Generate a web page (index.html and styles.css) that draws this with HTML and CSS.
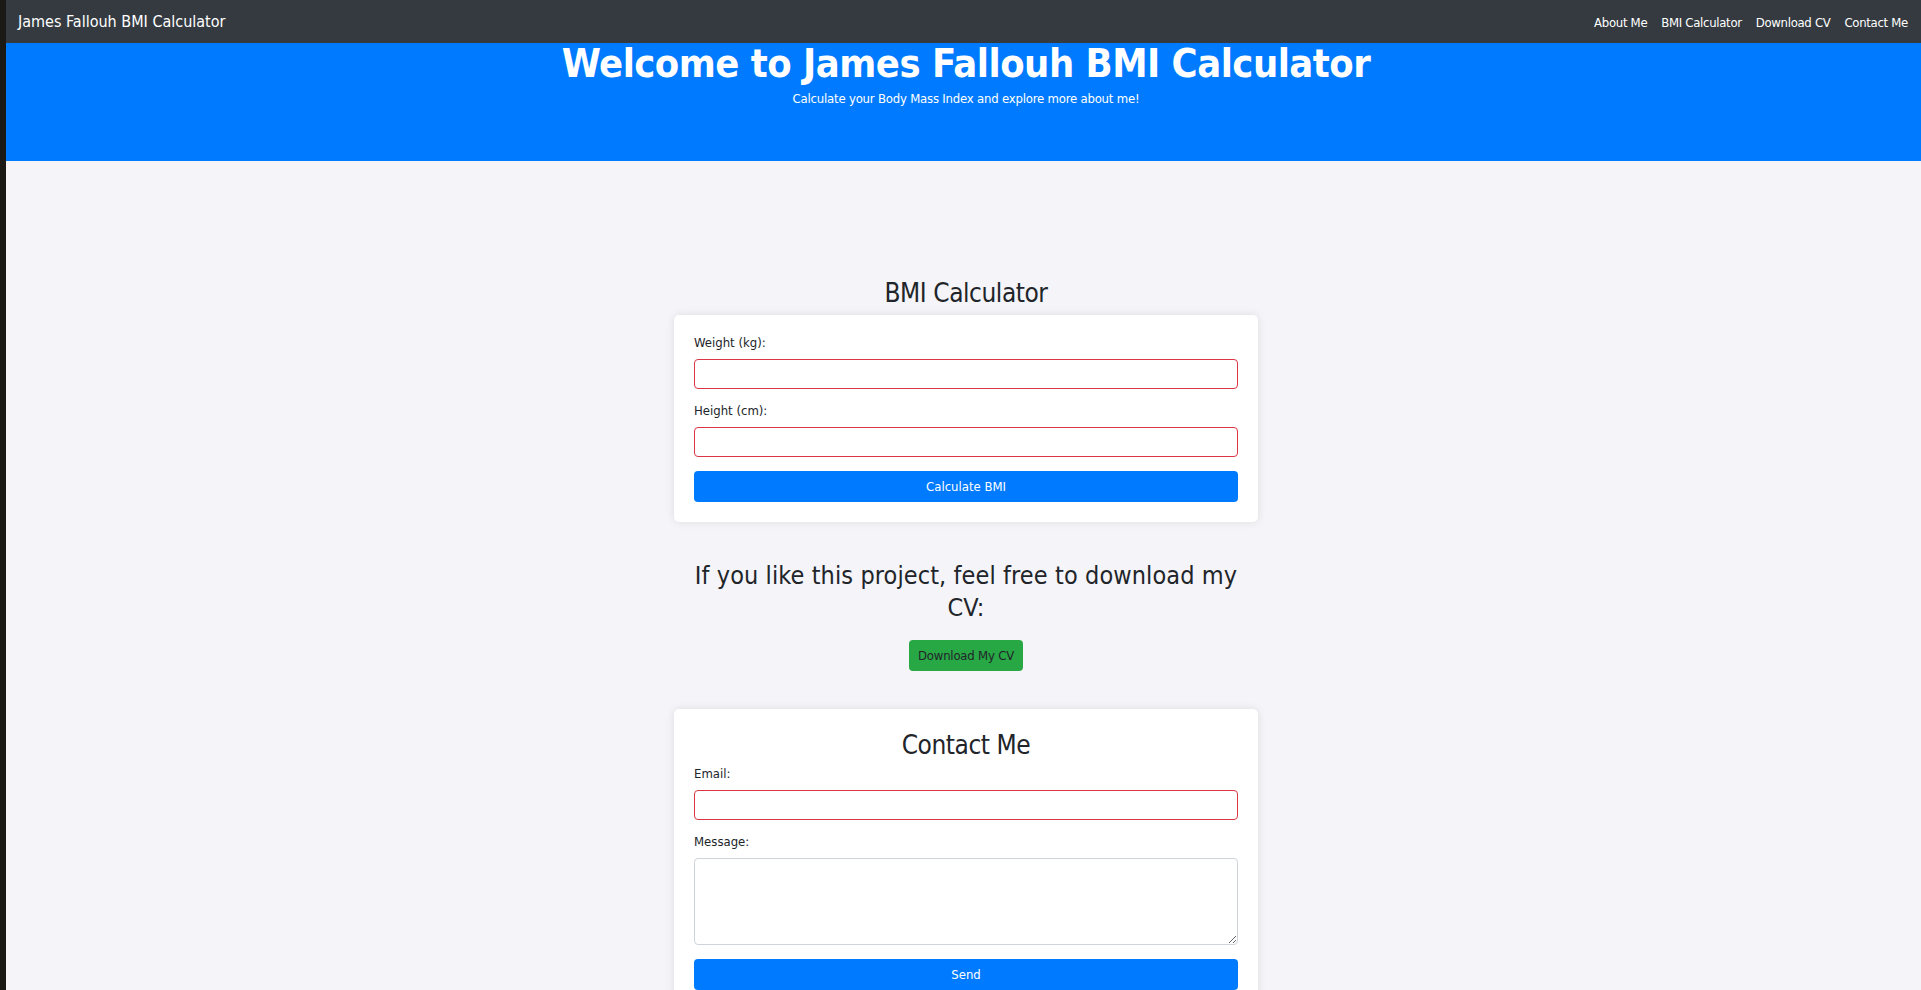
FILE: index.html
```html
<!DOCTYPE html>
<html lang="en">
<head>
<meta charset="utf-8">
<title>James Fallouh BMI Calculator</title>
<link rel="stylesheet" href="styles.css">
</head>
<body>
<nav class="navbar">
  <a class="brand" href="#">James Fallouh BMI Calculator</a>
  <ul class="nav-links">
    <li><a href="#about">About Me</a></li>
    <li><a href="#bmi">BMI Calculator</a></li>
    <li><a href="#cv">Download CV</a></li>
    <li><a href="#contact">Contact Me</a></li>
  </ul>
</nav>
<header class="hero">
  <h1 class="hero-title">Welcome to James Fallouh BMI Calculator</h1>
  <p class="hero-sub">Calculate your Body Mass Index and explore more about me!</p>
</header>
<main class="container">
  <section class="bmi" id="bmi">
    <h2 class="section-title">BMI Calculator</h2>
    <form class="card">
      <label class="field-label" for="weight">Weight (kg):</label>
      <input class="field invalid" id="weight" type="number">
      <label class="field-label" for="height">Height (cm):</label>
      <input class="field invalid" id="height" type="number">
      <button class="btn btn-primary" type="button">Calculate BMI</button>
    </form>
  </section>
  <section class="cv" id="cv">
    <h3 class="cv-title">If you like this project, feel free to download my CV:</h3>
    <button class="btn btn-success" type="button">Download My CV</button>
  </section>
  <section class="card contact" id="contact">
    <h2 class="section-title">Contact Me</h2>
    <label class="field-label" for="email">Email:</label>
    <input class="field invalid" id="email" type="email">
    <label class="field-label" for="message">Message:</label>
    <textarea class="field textarea" id="message"></textarea>
    <button class="btn btn-primary" type="button">Send</button>
  </section>
</main>
</body>
</html>
```

FILE: styles.css
```css
html {
  background: #1b1916;
  overflow: hidden;
}
body {
  margin: 0 0 0 6px;
  width: 1920px;
  min-height: 990px;
  background: #f4f4f9;
  font-family: "DejaVu Sans Condensed", "DejaVu Sans", sans-serif;
  color: #212529;
}
.navbar {
  height: 43px;
  background: #343a40;
  display: flex;
  align-items: center;
  justify-content: space-between;
  padding: 0 18px 0 12px;
}
.brand {
  color: #fff;
  text-decoration: none;
  font-size: 16px;
}
.nav-links {
  list-style: none;
  display: flex;
  gap: 14px;
  margin: 0;
  padding: 0;
}
.nav-links a {
  color: #fff;
  text-decoration: none;
  font-size: 13px;
  letter-spacing: -0.3px;
}
.hero {
  background: #007bff;
  color: #fff;
  text-align: center;
  padding: 0 0 54px;
}
.hero-title {
  margin: 0;
  font-size: 39.5px;
  line-height: 40px;
  font-weight: bold;
  letter-spacing: -0.5px;
}
.hero-sub {
  margin: 8px 0 0;
  font-size: 13px;
  line-height: 16px;
  letter-spacing: -0.2px;
}
.container {
  width: 584px;
  margin: 0 auto;
  padding-top: 116px;
}
.section-title {
  margin: 0 0 5px;
  font-size: 26px;
  line-height: 32.5px;
  font-weight: normal;
  text-align: center;
  letter-spacing: -0.45px;
}
.card {
  background: #fff;
  border-radius: 5px;
  box-shadow: 0 0 8px rgba(0, 0, 0, 0.1);
  padding: 20px;
  display: flex;
  flex-direction: column;
  margin: 0 0 18px;
}
.field-label {
  font-size: 13px;
  line-height: 16px;
  margin-bottom: 8px;
}
.field {
  box-sizing: border-box;
  height: 30px;
  border: 1px solid #ced4da;
  border-radius: 4px;
  margin: 0 0 14px;
  padding: 5px 8px;
  font-family: inherit;
  font-size: 13px;
  background: #fff;
}
.field.invalid {
  border-color: #dc3545;
}
.textarea {
  height: 87px;
  resize: vertical;
}
.btn {
  box-sizing: border-box;
  height: 31px;
  border: none;
  border-radius: 4px;
  font-family: inherit;
  font-size: 13px;
  cursor: pointer;
}
.btn-primary {
  background: #007bff;
  color: #fff;
}
.btn-success {
  background: #28a745;
  color: #212529;
  padding: 0 9px;
  letter-spacing: -0.2px;
}
.cv {
  padding: 20px 20px 18px;
  text-align: center;
  margin-bottom: 20px;
}
.cv-title {
  margin: 0 -10px 15px;
  font-size: 25px;
  line-height: 32.6px;
  font-weight: normal;
  letter-spacing: 0.1px;
}
.contact {
  margin-bottom: 0;
}
```
